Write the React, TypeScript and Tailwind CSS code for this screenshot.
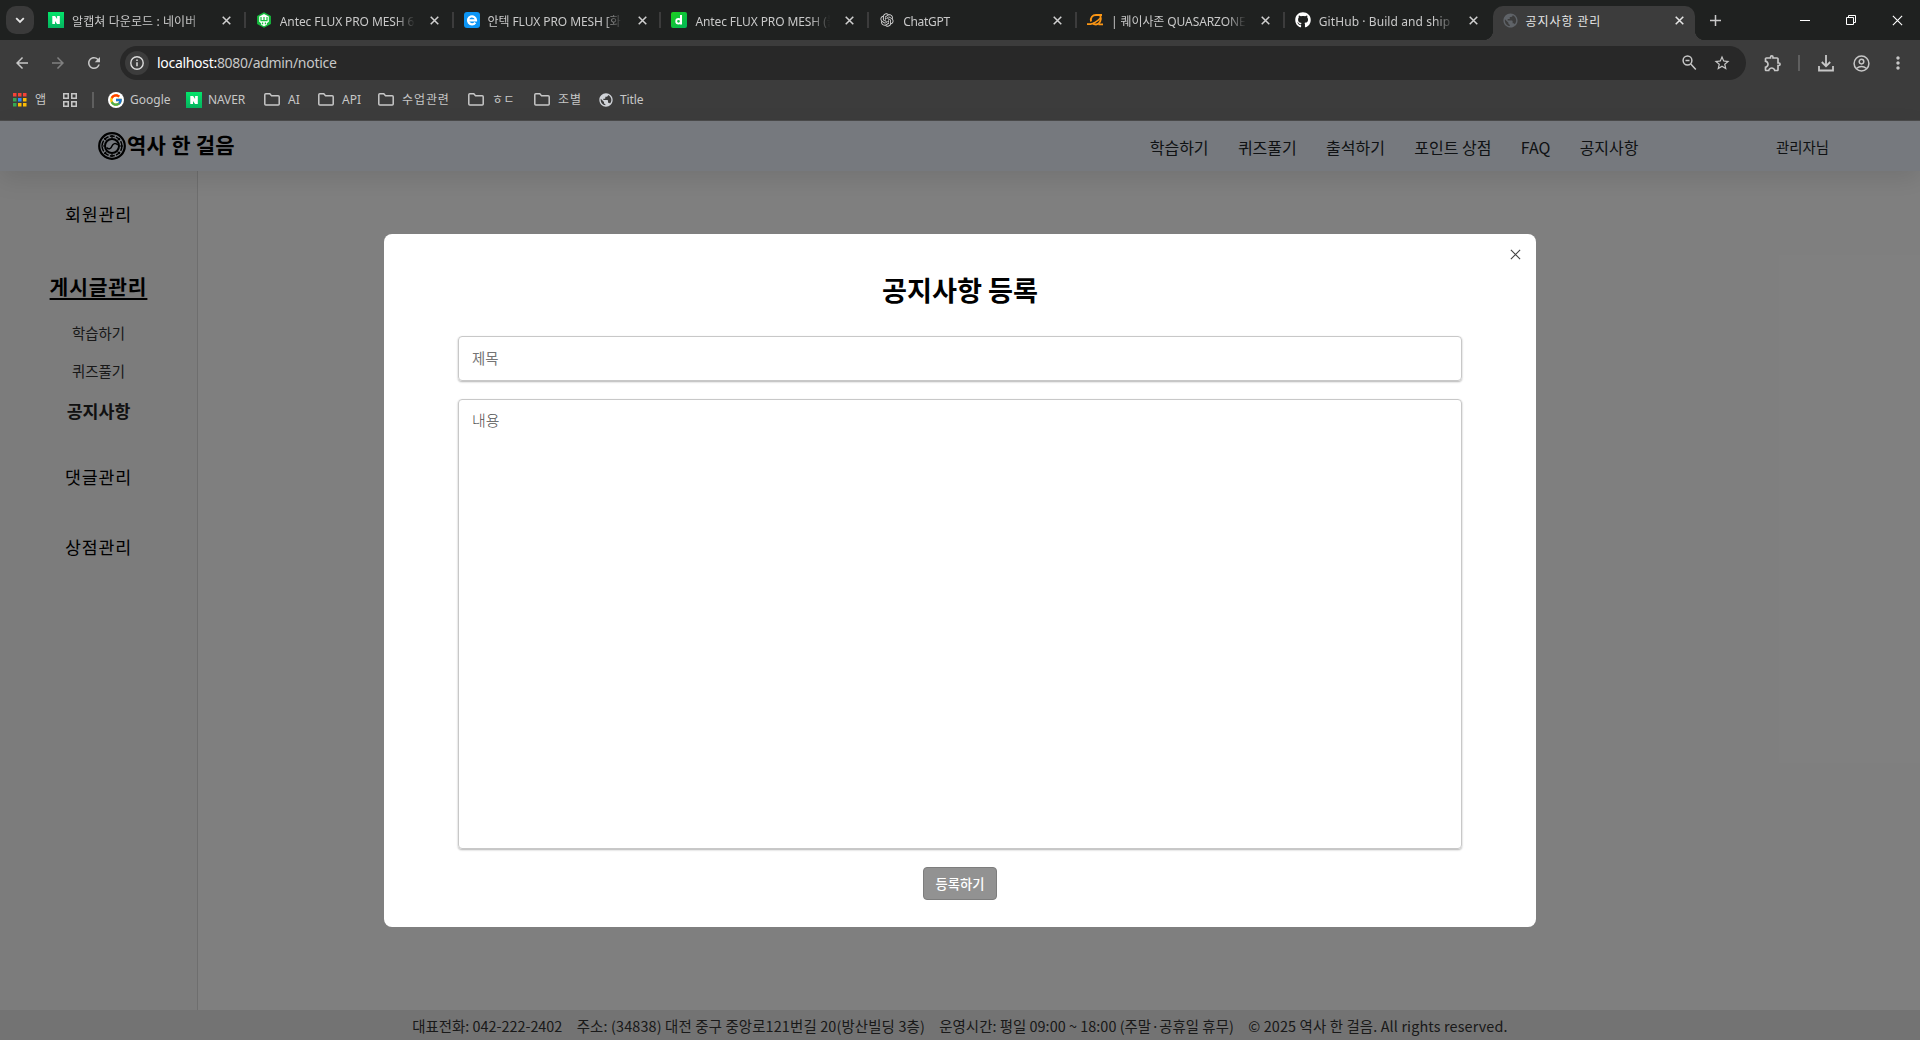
import React from "react";
import {
  MdArrowBack, MdArrowForward, MdRefresh, MdStarBorder,
  MdOutlineExtension, MdMoreVert, MdPublic,
} from "react-icons/md";
import { FcGoogle } from "react-icons/fc";
import { FaGithub } from "react-icons/fa";
import { RiOpenaiFill } from "react-icons/ri";

const NaverIcon = () => (
  <svg width="16" height="16" viewBox="0 0 16 16">
    <defs>
      <linearGradient id="nv" x1="0" y1="0" x2="0" y2="1">
        <stop offset="0" stopColor="#03e56b" />
        <stop offset="1" stopColor="#05b35f" />
      </linearGradient>
    </defs>
    <rect width="16" height="16" fill="url(#nv)" />
    <path d="M4.300 4h2.800l2 3V4h2.700v8H9L7 9v3H4.300z" fill="#fff" />
  </svg>
);

const HexIcon = () => (
  <svg width="16" height="16" viewBox="0 0 16 16">
    <path d="M8 .2 14.900 4v8L8 15.800 1.100 12V4z" fill="#16bd3e" />
    <path d="M3.200 4.600 8 2l4.800 2.600v5.200l-2 1.400v1.600L8 14.200l-2.800-1.400v-1.600l-2-1.400z" fill="#fff" />
    <path d="M5 5v3.600h6V5M8 5v3.600M6.600 10.500v1.700M9.400 10.500v1.700" fill="none" stroke="#16bd3e" strokeWidth="1.200" />
  </svg>
);

const EIcon = () => (
  <svg width="16" height="16" viewBox="0 0 16 16">
    <rect width="16" height="16" rx="3" fill="#0c95f5" />
    <path d="M4.500 8.300H12A4 4 0 1 0 11.300 10.600" fill="none" stroke="#fff" strokeWidth="2.200" />
  </svg>
);

const DIcon = () => (
  <svg width="16" height="16" viewBox="0 0 16 16">
    <defs>
      <linearGradient id="dn" x1="0" y1="0" x2="1" y2="1">
        <stop offset="0" stopColor="#1dd01d" />
        <stop offset="1" stopColor="#00b659" />
      </linearGradient>
    </defs>
    <rect width="16" height="16" rx="2" fill="url(#dn)" />
    <circle cx="7.500" cy="9.300" r="2.300" fill="none" stroke="#fff" strokeWidth="1.800" />
    <path d="M10 3v9.500" stroke="#fff" strokeWidth="2" />
  </svg>
);

const QuasarIcon = () => (
  <svg width="17" height="16" viewBox="0 0 17 16" fill="none" stroke="#fb9614">
    <path d="M4 9.500C3.200 5.500 5.500 3 9 3h6M13.300 3.500C14.600 7.500 13 12.500 9 12.500c-1.400 0-2.600-.4-3.400-1.300" strokeWidth="1.900" />
    <path d="M0 12.200h3.500C7 11.500 10.500 9 13.500 6M11.500 12.300H16" strokeWidth="1.700" />
  </svg>
);

const FolderIcon = () => (
  <svg width="16" height="13" viewBox="0 0 16 13">
    <path d="M1.800.8h4l1.700 1.900h6.700q1 0 1 1v7.300q0 1-1 1H1.800q-1 0-1-1V1.800q0-1 1-1z" fill="none" stroke="#c7c7c7" strokeWidth="1.500" />
  </svg>
);

const AppsIcon = () => (
  <svg width="14" height="14" viewBox="0 0 14 14">
    {["#f44336", "#f44336", "#f44336", "#34a853", "#2f8af5", "#fbbc05", "#34a853", "#fbbc05", "#fbbc05"].map((c, i) => (
      <rect key={i} x={(i % 3) * 5} y={Math.floor(i / 3) * 5} width="3.500" height="3.500" fill={c} />
    ))}
  </svg>
);

const GridIcon = () => (
  <svg width="14" height="14" viewBox="0 0 14 14" fill="none" stroke="#c7c7c7" strokeWidth="1.500">
    <path d="M.75.75h4.500v4.500h-4.500zM8.750.75h4.500v4.500h-4.500zM.75 8.750h4.500v4.500h-4.500zM8.750 8.750h4.500v4.500h-4.500z" />
  </svg>
);

const Cross = ({ size, w, color }: { size: number; w: number; color: string }) => (
  <svg width={size} height={size} viewBox="0 0 10 10">
    <path d="M.8.8l8.400 8.400M9.200.8L.8 9.200" stroke={color} strokeWidth={w} />
  </svg>
);

const tabs = [
  { icon: <NaverIcon />, title: "알캡쳐 다운로드 : 네이버", cls: "tracking-[0.1px]" },
  { icon: <HexIcon />, title: "Antec FLUX PRO MESH 6", cls: "tracking-[-0.1px]" },
  { icon: <EIcon />, title: "안텍 FLUX PRO MESH [화", cls: "tracking-[-0.1px]" },
  { icon: <DIcon />, title: "Antec FLUX PRO MESH (블", cls: "tracking-[-0.1px]" },
  { icon: <RiOpenaiFill size={16} color="#d6d6d6" />, title: "ChatGPT", cls: "tracking-[-0.3px]" },
  { icon: <QuasarIcon />, title: "| 퀘이사존 QUASARZONE", cls: "tracking-[-0.1px]" },
  { icon: <FaGithub size={16} color="#fff" />, title: "GitHub · Build and ship s", cls: "tracking-[0.080px]" },
];

function TabStrip() {
  return (
    <div className="flex h-10 bg-[#1f2120]">
      <div className="flex w-[38px] shrink-0 items-center pl-1.5">
        <div className="flex size-7 items-center justify-center rounded-[10px] bg-[#3a3a3a]">
          <svg width="10" height="7" viewBox="0 0 10 7"><path d="M1.200 1.200L5 5l3.800-3.800" fill="none" stroke="#e6e6e6" strokeWidth="1.800" /></svg>
        </div>
      </div>
      {tabs.map((t, i) => (
        <div key={i} className="flex w-[207.800px] shrink-0 items-center pl-2.5">
          <span className="flex w-6 shrink-0">{t.icon}</span>
          <span className={"w-[138px] overflow-hidden whitespace-nowrap pt-[3px] text-[12px] leading-5 text-[#c9c9c9] [mask-image:linear-gradient(to_right,#000_84%,transparent_98%)] " + t.cls}>{t.title}</span>
          <span className="ml-3 flex"><Cross size={9} w={1.700} color="#d0d0d0" /></span>
          <span className={i < 6 ? "ml-auto h-4 w-0.5 bg-[#3c3c3c]" : "hidden"} />
        </div>
      ))}
      <div className="relative mt-1.5 flex w-[202px] shrink-0 items-center rounded-t-[10px] bg-[#3c3c3c] pb-1.5 pl-[9px]">
        <span className="absolute bottom-0 -left-2.5 size-2.5 bg-[radial-gradient(circle_at_0_0,transparent_10px,#3c3c3c_10.500px)]" />
        <span className="absolute bottom-0 -right-2.5 size-2.5 bg-[radial-gradient(circle_at_100%_0,transparent_10px,#3c3c3c_10.500px)]" />
        <span className="w-6"><MdPublic size={17} color="#5f6368" /></span>
        <span className="w-[135px] pt-[3px] text-[12px] leading-5 tracking-[0.9px] text-[#e6e6e6]">공지사항 관리</span>
        <span className="ml-[14px]"><Cross size={9} w={1.700} color="#e6e6e6" /></span>
      </div>
      <div className="flex flex-1 items-center">
        <svg className="ml-[15px]" width="11" height="11" viewBox="0 0 11 11"><path d="M5.500 0v11M0 5.500h11" stroke="#c9c9c9" strokeWidth="1.500" /></svg>
        <div className="ml-auto flex items-center gap-9 pr-[17px]">
          <span className="h-px w-2.5 bg-white" />
          <svg width="10" height="10" viewBox="0 0 10 10" fill="none" stroke="#fff"><path d="M.5 2.500h7v7h-7zM2.500 2.500v-2h7v7h-2" /></svg>
          <Cross size={11} w={1} color="#fff" />
        </div>
      </div>
    </div>
  );
}

function Toolbar() {
  return (
    <div className="flex h-[46px] items-center bg-[#3c3c3c] text-[#c7c7c7]">
      <span className="flex w-9 justify-center pl-2"><MdArrowBack size={18} /></span>
      <span className="flex w-9 justify-center pl-2 text-[#808080]"><MdArrowForward size={18} /></span>
      <span className="flex w-12 pl-[13px]"><MdRefresh size={18} /></span>
      <div className="flex h-[34px] w-[1626px] items-center rounded-full bg-[#282828] pl-[5px]">
        <span className="flex size-6 items-center justify-center rounded-full bg-[#3c3c3c]">
          <svg width="14" height="14" viewBox="0 0 14 14" fill="none" stroke="#dcdcdc"><circle cx="7" cy="7" r="6.200" strokeWidth="1.400" /><path d="M7 6.200v4M7 3.600v1.500" strokeWidth="1.500" /></svg>
        </span>
        <span className="ml-2 pb-px text-[14px] tracking-[-0.3px] text-[#c7c7c7]"><span className="text-white">localhost:</span>8080/admin/notice</span>
        <div className="ml-auto flex items-center gap-4 pr-[15px]">
          <svg width="15" height="16" viewBox="0 0 15 16" fill="none" stroke="#c7c7c7"><circle cx="5.500" cy="5.500" r="4.400" strokeWidth="1.500" /><path d="M8.800 9l5 5.500M3.500 5.500h4" strokeWidth="1.500" /></svg>
          <MdStarBorder size={18} />
        </div>
      </div>
      <span className="ml-[17px]"><MdOutlineExtension size={20} /></span>
      <span className="ml-[15px] h-4 w-0.5 bg-[#5f5f5f]" />
      <svg className="ml-[18px]" width="16" height="17" viewBox="0 0 16 17" fill="none" stroke="#c7c7c7" strokeWidth="1.800"><path d="M8 0v11M3.800 7L8 11.200 12.200 7M1 11v4.500h14V11" /></svg>
      <svg className="ml-[19px]" width="17" height="17" viewBox="0 0 17 17" fill="none" stroke="#c7c7c7" strokeWidth="1.500"><circle cx="8.500" cy="8.500" r="7.400" /><circle cx="8.500" cy="6.600" r="2.300" /><path d="M3.300 13.500q5.200-3.800 10.400 0" /></svg>
      <span className="ml-[18px]"><MdMoreVert size={20} /></span>
    </div>
  );
}

const folders = [
  { name: "AI", w: "w-[54px]" },
  { name: "API", w: "w-[60px]" },
  { name: "수업관련", w: "w-[90px] tracking-[0.9px]" },
  { name: "ㅎㄷ", w: "w-[66px] tracking-[0.5px]" },
  { name: "조별", w: "w-[64px] tracking-[0.9px]" },
];

function Bookmarks() {
  return (
    <div className="flex h-[35px] items-center border-b border-[#4b4b4b] bg-[#3c3c3c] pb-[7px] pl-[13px] pr-4 text-[12px] text-[#c7c7c7]">
      <span className="w-[22px]"><AppsIcon /></span>
      <span className="w-7">앱</span>
      <span className="w-[29px]"><GridIcon /></span>
      <span className="mr-[14px] h-4 w-0.5 bg-[#5f5f5f]" />
      <span className="mr-1.5 flex size-4 items-center justify-center rounded-full bg-white"><FcGoogle size={14} /></span>
      <span className="w-14">Google</span>
      <NaverIcon />
      <span className="ml-1.5 w-14 tracking-[-0.1px]">NAVER</span>
      {folders.map((f) => (
        <span key={f.name} className={"flex items-center gap-2 whitespace-nowrap " + f.w}><FolderIcon />{f.name}</span>
      ))}
      <MdPublic size={16} color="#d0d3d8" />
      <span className="ml-1.5 tracking-[-0.1px]">Title</span>
    </div>
  );
}

const LogoMark = () => (
  <svg width="28" height="28" viewBox="0 0 28 28" fill="none" stroke="#000">
    <circle cx="14" cy="14" r="12.800" strokeWidth="2.200" />
    <circle cx="14" cy="14" r="9.900" strokeWidth="1.500" strokeDasharray="5 1.300" />
    <circle cx="14" cy="14" r="7" strokeWidth="2" />
    <path d="M14 3v3M14 22v3M3 14h3M22 14h3M6.200 6.200l2.200 2.200M19.600 19.600l2.200 2.200M6.200 21.800l2.200-2.200M19.600 8.400l2.200-2.200" strokeWidth="1.200" />
    <path d="M8.500 15.500c2.500 2.500 4.500 1 5.500-1.500s3.500-3.500 5.800-1" strokeWidth="1.500" />
  </svg>
);

function SiteHeader() {
  return (
    <header className="relative z-10 flex h-[50px] items-center bg-[#ecf3fc] shadow-[0_8px_24px_rgba(0,0,0,0.1)]">
      <div className="ml-[98px] flex items-center">
        <LogoMark />
        <span className="ml-px pb-[3px] text-[21px] font-bold leading-none tracking-[0.25px] text-black">역사 한 걸음</span>
      </div>
      <nav className="ml-auto flex gap-[29.300px] pt-0.5 text-[16px] leading-6 text-[#212529]">
        {["학습하기", "퀴즈풀기", "출석하기", "포인트 상점", "FAQ", "공지사항"].map((n) => <a key={n}>{n}</a>)}
      </nav>
      <span className="ml-[137.500px] mr-[91px] pt-0.5 text-[14.400px] text-[#212529]">관리자님</span>
    </header>
  );
}

function Sidebar() {
  return (
    <aside className="flex w-[198px] shrink-0 flex-col items-center border-r border-[#dcdcdc] bg-[#f8f8f8] text-black">
      <a className="mt-[30px] h-[72px] text-[17.300px] leading-[26px] tracking-[0.9px]">회원관리</a>
      <a className="h-[47px] text-[20.300px] font-bold leading-[26px] tracking-[0.9px] underline decoration-2 underline-offset-[3px]">게시글관리</a>
      <a className="h-[38px] text-[14.400px] leading-[26px] text-[#333]">학습하기</a>
      <a className="h-[40px] text-[14.400px] leading-[26px] text-[#333]">퀴즈풀기</a>
      <a className="h-[66px] text-[17.300px] font-bold leading-[26px] text-[#222]">공지사항</a>
      <a className="h-[70px] text-[17.300px] leading-[26px] tracking-[0.9px]">댓글관리</a>
      <a className="text-[17.300px] leading-[26px] tracking-[0.9px]">상점관리</a>
    </aside>
  );
}

function NoticeModal() {
  return (
    <div className="relative flex h-[693px] w-[1152px] flex-col items-center rounded-[8px] bg-white">
      <button className="absolute right-[15px] top-[15px]"><Cross size={11} w={1} color="#444" /></button>
      <h2 className="mt-[35px] text-[27.200px] font-bold leading-10 text-black">공지사항 등록</h2>
      <input placeholder="제목" className="mt-[27px] h-[45px] w-[1004px] shrink-0 rounded-[4px] border border-[#c8c8c8] px-[13px] pb-0.5 text-[14.400px] shadow-[0_1px_2px_rgba(0,0,0,0.3)] placeholder:text-[#757575]" />
      <textarea placeholder="내용" className="mt-[18px] h-[450px] w-[1004px] shrink-0 resize-none rounded-[4px] border border-[#c8c8c8] px-[13px] py-[9px] text-[15px] font-light shadow-[0_1px_2px_rgba(0,0,0,0.3)] placeholder:text-[#505050]" />
      <button className="mt-[18px] h-[33px] w-[74px] rounded-[4px] border border-[#7d7d7d] bg-[#929292] text-[13.300px] font-medium text-white">등록하기</button>
    </div>
  );
}

export default function App() {
  return (
    <div className="flex h-[1040px] w-[1920px] flex-col overflow-hidden">
      <div className="font-['Noto_Sans','Noto_Sans_CJK_KR',sans-serif]">
        <TabStrip />
        <Toolbar />
        <Bookmarks />
      </div>
      <div className="relative flex flex-1 flex-col bg-white font-['Noto_Sans_CJK_KR',sans-serif]">
        <SiteHeader />
        <div className="flex flex-1">
          <Sidebar />
          <main className="flex-1 bg-white" />
        </div>
        <footer className="flex h-[30px] items-center justify-center gap-[14.400px] whitespace-nowrap bg-[#e6e6e6] pt-0.5 text-[14.400px] text-[#333]">
          <span>대표전화: 042-222-2402</span>
          <span className="tracking-[0.150px]">주소: (34838) 대전 중구 중앙로121번길 20(방산빌딩 3층)</span>
          <span className="tracking-[0.040px]">운영시간: 평일 09:00 ~ 18:00 (주말·공휴일 휴무)</span>
          <span className="tracking-[0.140px]">© 2025 역사 한 걸음. All rights reserved.</span>
        </footer>
        <div className="absolute inset-0 z-20 flex items-center justify-center bg-black/50">
          <NoticeModal />
        </div>
      </div>
    </div>
  );
}
